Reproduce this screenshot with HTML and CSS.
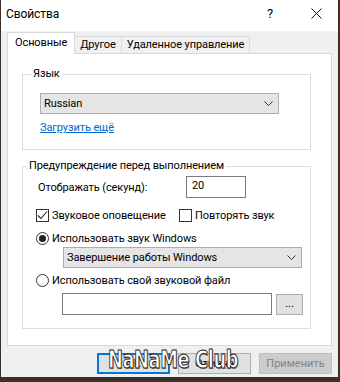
FILE: index.html
```html
<!DOCTYPE html>
<html lang="ru">
<head>
    <meta charset="UTF-8">
    <meta name="viewport" content="width=device-width, initial-scale=1.0">
    <title>Свойства</title>
    <link rel="stylesheet" href="styles.css">
</head>
<body>
    <div class="window">
        <div class="titlebar">
            <span class="title">Свойства</span>
            <span class="help">?</span>
            <span class="close">
                <svg width="11" height="11" viewBox="0 0 11 11"><path d="M0.5 0.5 L10.5 10.5 M10.5 0.5 L0.5 10.5" stroke="#111" stroke-width="1" fill="none"/></svg>
            </span>
        </div>

        <div class="tabs">
            <div class="tab active">Основные</div>
            <div class="tab">Другое</div>
            <div class="tab">Удаленное управление</div>
        </div>

        <div class="panel">
            <fieldset class="group group-lang">
                <legend>Язык</legend>
                <div class="combo combo-lang">
                    <span>Russian</span>
                    <svg width="9" height="5" viewBox="0 0 9 5"><path d="M0.5 0.5 L4.5 4.5 L8.5 0.5" stroke="#333" fill="none"/></svg>
                </div>
                <a class="link" href="#">Загрузить ещё</a>
            </fieldset>

            <fieldset class="group group-warn">
                <legend>Предупреждение перед выполнением</legend>
                <div class="row row-time">
                    <span class="label-time">Отображать (секунд):</span>
                    <div class="edit edit-time">20</div>
                </div>
                <div class="row row-checks">
                    <label class="check check-sound">
                        <span class="box checked">
                            <svg width="11" height="11" viewBox="0 0 11 11"><path d="M1 5.5 L4 8.5 L10 1.5" stroke="#222" stroke-width="1.1" fill="none"/></svg>
                        </span>
                        Звуковое оповещение
                    </label>
                    <label class="check">
                        <span class="box"></span>
                        Повторять звук
                    </label>
                </div>
                <label class="row check radio-row">
                    <span class="radio on"></span>
                    Использовать звук Windows
                </label>
                <div class="combo combo-sound">
                    <span>Завершение работы Windows</span>
                    <svg width="9" height="5" viewBox="0 0 9 5"><path d="M0.5 0.5 L4.5 4.5 L8.5 0.5" stroke="#333" fill="none"/></svg>
                </div>
                <label class="row check radio-row radio-file">
                    <span class="radio"></span>
                    Использовать свой звуковой файл
                </label>
                <div class="row row-file">
                    <div class="edit edit-file"></div>
                    <button class="btn btn-browse">...</button>
                </div>
            </fieldset>
        </div>

        <div class="buttons">
            <button class="btn btn-main default">OK</button>
            <button class="btn btn-main">Отмена</button>
            <button class="btn btn-main disabled">Применить</button>
        </div>

        <div class="watermark">NaNaMe Club</div>
    </div>
</body>
</html>
```

FILE: styles.css
```css
* {
    box-sizing: border-box;
}
body {
    margin: 0;
    background-color: #3b2f27;
    font-family: Roboto, "Noto Sans", sans-serif;
    font-size: 11px;
    letter-spacing: -0.1px;
    color: #000;
}
.window {
    position: relative;
    width: 337px;
    height: 377px;
    margin-left: 1px;
    background-color: #f0f0f0;
}
.titlebar {
    display: flex;
    align-items: center;
    height: 31px;
    padding-left: 5px;
    background-color: #fff;
}
.title {
    font-size: 12px;
    flex: 1;
    margin-top: -4px;
}
.help {
    font-size: 13px;
    margin-right: 38px;
    margin-top: -4px;
}
.close {
    display: flex;
    margin-right: 16px;
    margin-top: -4px;
}

.tabs {
    display: flex;
    align-items: flex-end;
    height: 22px;
    padding-left: 6px;
    position: relative;
    z-index: 1;
}
.tab {
    height: 17px;
    padding: 0 5px;
    line-height: 16px;
    border: 1px solid #d9d9d9;
    border-bottom: none;
    background-color: #f0f0f0;
}
.tab + .tab {
    margin-left: -1px;
}
.tab.active {
    height: 22px;
    line-height: 20px;
    padding: 0 7px;
    background-color: #fff;
    margin-bottom: -1px;
}

.panel {
    height: 293px;
    width: 325px;
    margin-left: 6px;
    padding: 12px 0 0 14px;
    background-color: #fff;
    border: 1px solid #d9d9d9;
}
.group {
    width: 289px;
    margin: 0;
    padding: 0 0 0 17px;
    border: 1px solid #dcdcdc;
}
.group legend {
    padding: 0 2px;
    margin-left: -9px;
    line-height: 16px;
}
.group-lang {
    height: 84px;
}
.group-warn {
    margin-top: 8px;
    height: 171px;
    padding-left: 13px;
}
.combo {
    display: flex;
    align-items: center;
    justify-content: space-between;
    width: 239px;
    height: 21px;
    padding: 0 5px 0 3px;
    background-color: #e5e5e5;
    border: 1px solid #adadad;
}
.combo-lang {
    margin-top: 11px;
}
.link {
    display: inline-block;
    margin-top: 6px;
    line-height: 16px;
    color: #0066cc;
    text-decoration: underline;
}

.row {
    display: flex;
    align-items: center;
}
.row-time {
    margin-top: 2px;
    height: 22px;
}
.label-time {
    width: 150px;
    padding-left: 2px;
}
.edit {
    height: 22px;
    background-color: #fff;
    border: 1px solid #7a7a7a;
    padding: 2px 5px;
}
.edit-time {
    width: 60px;
}
.row-checks {
    margin-top: 9px;
    height: 16px;
}
.check {
    display: flex;
    align-items: center;
    height: 16px;
    white-space: nowrap;
}
.check-sound {
    width: 143px;
}
.box {
    display: flex;
    width: 13px;
    height: 13px;
    border: 1px solid #333;
    margin-right: 3px;
    background-color: #fff;
}
.radio {
    width: 13px;
    height: 13px;
    border: 1px solid #333;
    border-radius: 50%;
    margin-right: 3px;
    display: flex;
    align-items: center;
    justify-content: center;
}
.radio.on::after {
    content: "";
    width: 7px;
    height: 7px;
    border-radius: 50%;
    background-color: #222;
}
.radio-row {
    margin-top: 7px;
}
.combo-sound {
    margin-top: 1px;
    margin-left: 27px;
}
.radio-file {
    margin-top: 4px;
}
.row-file {
    margin-top: 5px;
    margin-left: 26px;
}
.edit-file {
    width: 210px;
}
.btn {
    font-family: inherit;
    font-size: 11px;
    background-color: #e1e1e1;
    border: 1px solid #adadad;
    color: #000;
    padding: 0;
}
.btn-browse {
    width: 27px;
    height: 21px;
    margin-left: 4px;
    line-height: 14px;
}

.buttons {
    display: flex;
    justify-content: flex-end;
    gap: 8px;
    margin-top: 7px;
    padding-right: 6px;
}
.btn-main {
    width: 73px;
    height: 21px;
}
.btn-main.default {
    border: 2px solid #0078d7;
}
.btn-main.disabled {
    background-color: #cccccc;
    border-color: #bfbfbf;
    color: #838383;
}
.watermark {
    position: absolute;
    left: 107px;
    top: 346px;
    font-family: "DejaVu Sans", sans-serif;
    font-weight: bold;
    font-size: 24px;
    letter-spacing: -0.5px;
    color: #fff;
    -webkit-text-stroke: 1px #222;
    text-shadow: 1px 1px 0 #888;
    transform: scaleX(0.74);
    transform-origin: left top;
    pointer-events: none;
}
```
